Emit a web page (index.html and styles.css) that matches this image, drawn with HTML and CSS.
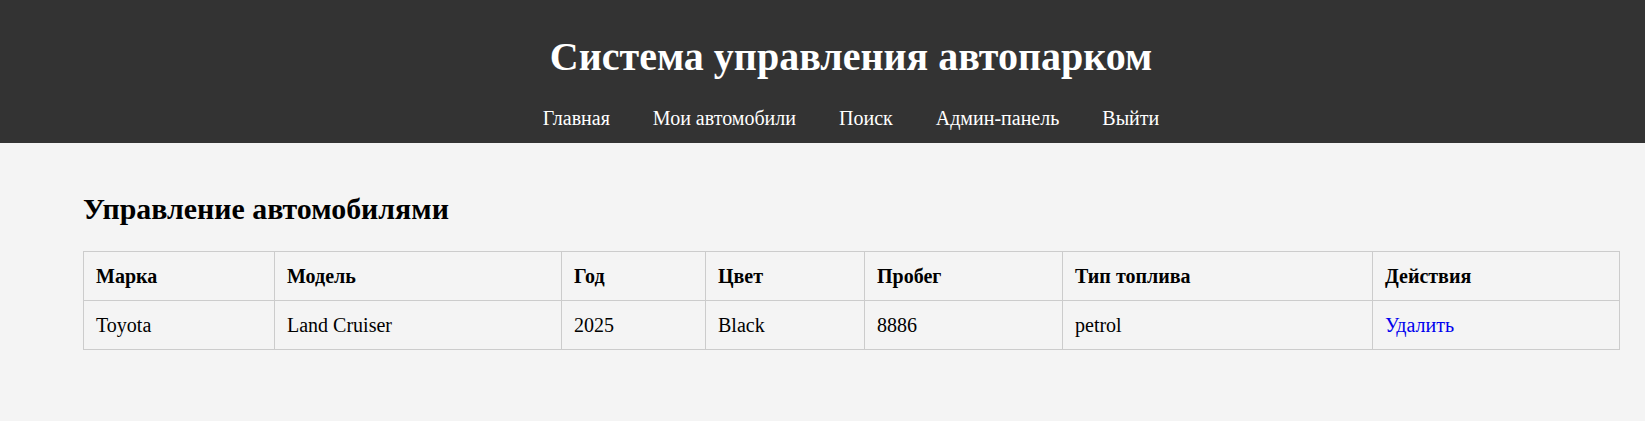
FILE: index.html
```html
<!DOCTYPE html>
<html lang="ru">
<head>
<meta charset="utf-8">
<title>Система управления автопарком</title>
<link rel="stylesheet" href="styles.css">
</head>
<body>
<div class="page">
  <header class="site-header">
    <h1 class="site-title">Система управления автопарком</h1>
    <nav class="site-nav">
      <a href="#">Главная</a>
      <a href="#">Мои автомобили</a>
      <a href="#">Поиск</a>
      <a href="#">Админ-панель</a>
      <a href="#">Выйти</a>
    </nav>
  </header>
  <main class="content">
    <h2 class="section-title">Управление автомобилями</h2>
    <table class="cars">
      <colgroup>
        <col class="c1"><col class="c2"><col class="c3"><col class="c4"><col class="c5"><col class="c6"><col class="c7">
      </colgroup>
      <thead>
        <tr>
          <th>Марка</th><th>Модель</th><th>Год</th><th>Цвет</th><th>Пробег</th><th>Тип топлива</th><th>Действия</th>
        </tr>
      </thead>
      <tbody>
        <tr>
          <td>Toyota</td><td>Land Cruiser</td><td>2025</td><td>Black</td><td>8886</td><td>petrol</td><td><a class="action" href="#">Удалить</a></td>
        </tr>
      </tbody>
    </table>
  </main>
</div>
</body>
</html>
```

FILE: styles.css
```css
html, body {
  margin: 0;
  padding: 0;
}

body {
  background: #f4f4f4;
  color: #000;
  font-family: "Liberation Serif", "Times New Roman", serif;
  font-size: 20px;
  overflow: hidden;
}

.page {
  width: 1702px;
}

.site-header {
  background: #333333;
  color: #fff;
  text-align: center;
  padding: 32px 0 13px;
}

.site-title {
  margin: 0 0 25px;
  font-size: 40px;
  line-height: 49px;
  font-weight: bold;
}

.site-nav {
  display: flex;
  justify-content: center;
  gap: 43px;
  line-height: 24px;
}

.site-nav a {
  color: #fff;
  text-decoration: none;
}

.content {
  padding: 49px 83px 0;
}

.section-title {
  margin: 0 0 25px;
  font-size: 29.9px;
  line-height: 34px;
  font-weight: bold;
}

.cars {
  border-collapse: collapse;
  table-layout: fixed;
  width: 1537px;
}

.cars .c1 { width: 191px; }
.cars .c2 { width: 287px; }
.cars .c3 { width: 144px; }
.cars .c4 { width: 159px; }
.cars .c5 { width: 198px; }
.cars .c6 { width: 310px; }
.cars .c7 { width: 247px; }

.cars th,
.cars td {
  border: 1px solid #cccccc;
  padding: 12px;
  line-height: 24px;
  text-align: left;
  font-size: 20px;
}

.cars th {
  font-weight: bold;
}

.action {
  color: #0000ee;
  text-decoration: none;
}
```
